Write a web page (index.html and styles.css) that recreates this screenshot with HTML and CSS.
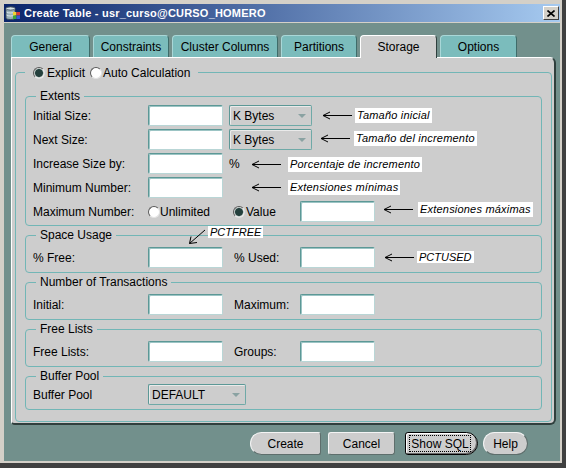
FILE: index.html
```html
<!DOCTYPE html>
<html>
<head>
<meta charset="utf-8">
<title>Create Table</title>
<link rel="stylesheet" href="styles.css">
</head>
<body>
<div class="window">
  <div class="titlebar">
    <svg class="app-icon" width="16" height="16" viewBox="0 0 16 16">
      <path d="M1 3.5 C1 1.5 10 1.5 10 3.5 V13 C10 15 1 15 1 13 Z" fill="#9ab0b8" stroke="#3a4a58" stroke-width="1"/>
      <ellipse cx="5.5" cy="3.5" rx="4.5" ry="1.6" fill="#d8e4ea" stroke="#3a4a58" stroke-width="0.8"/>
      <path d="M1.5 7 C3 8.3 8 8.3 9.5 7 M1.5 10 C3 11.3 8 11.3 9.5 10" stroke="#e8f0f4" fill="none" stroke-width="0.8"/>
      <rect x="8" y="7" width="3.5" height="3.5" fill="#f2d230"/>
      <rect x="11.5" y="7" width="3.5" height="3.5" fill="#d83a3a"/>
      <rect x="8" y="10.5" width="3.5" height="3.5" fill="#3aa83a"/>
      <rect x="11.5" y="10.5" width="3.5" height="3.5" fill="#3a5ad8"/>
    </svg>
    <span class="title">Create Table - usr_curso@CURSO_HOMERO</span>
    <span class="close"><svg width="8" height="7" viewBox="0 0 8 7"><path d="M0.5 0.5 L7.5 6.5 M7.5 0.5 L0.5 6.5" stroke="#000" stroke-width="1.6"/></svg></span>
  </div>

  <div class="client">
    <div class="tabs">
      <div class="tab t-general">General</div>
      <div class="tab t-constraints">Constraints</div>
      <div class="tab t-cluster">Cluster Columns</div>
      <div class="tab t-partitions">Partitions</div>
      <div class="tab t-storage active">Storage</div>
      <div class="tab t-options">Options</div>
    </div>

    <div class="panel">
      <fieldset class="outer">
        <legend class="mode"><span class="radio on"></span><span class="mtext">Explicit</span><span class="radio r-auto"></span><span class="mtext">Auto Calculation</span></legend>

        <fieldset class="group g-extents">
          <legend>Extents</legend>
          <div class="row"><span class="lbl">Initial Size:</span><span class="field"></span><span class="select s-unit">K Bytes<i class="caret"></i></span></div>
          <div class="row"><span class="lbl">Next Size:</span><span class="field"></span><span class="select s-unit">K Bytes<i class="caret"></i></span></div>
          <div class="row"><span class="lbl">Increase Size by:</span><span class="field"></span><span class="pct">%</span></div>
          <div class="row"><span class="lbl">Minimum Number:</span><span class="field"></span></div>
          <div class="row"><span class="lbl">Maximum Number:</span><span class="opt o-unl"><span class="radio"></span>Unlimited</span><span class="opt o-val"><span class="radio on"></span>Value</span><span class="field"></span></div>
        </fieldset>

        <fieldset class="group g-space">
          <legend>Space Usage</legend>
          <div class="row"><span class="lbl">% Free:</span><span class="field"></span><span class="lbl2">% Used:</span><span class="field"></span></div>
        </fieldset>

        <fieldset class="group g-trans">
          <legend>Number of Transactions</legend>
          <div class="row"><span class="lbl">Initial:</span><span class="field"></span><span class="lbl2">Maximum:</span><span class="field"></span></div>
        </fieldset>

        <fieldset class="group g-free">
          <legend>Free Lists</legend>
          <div class="row"><span class="lbl">Free Lists:</span><span class="field"></span><span class="lbl2">Groups:</span><span class="field"></span></div>
        </fieldset>

        <fieldset class="group g-buffer">
          <legend>Buffer Pool</legend>
          <div class="row"><span class="lbl">Buffer Pool</span><span class="select s-pool">DEFAULT<i class="caret"></i></span></div>
        </fieldset>
      </fieldset>
    </div>

    <div class="buttons">
      <span class="btn b-create">Create</span>
      <span class="btn b-cancel">Cancel</span>
      <span class="btn b-sql"><span class="focus">Show SQL</span></span>
      <span class="btn b-help">Help</span>
    </div>
  </div>

  <div class="notes">
    <div class="note n1"><svg class="arrow" viewBox="0 0 30 9"><path d="M1 4.5H30M1 4.5L8 1M1 4.5L8 8"/></svg><span class="tag">Tamaño inicial</span></div>
    <div class="note n2"><svg class="arrow" viewBox="0 0 30 9"><path d="M1 4.5H30M1 4.5L8 1M1 4.5L8 8"/></svg><span class="tag">Tamaño del incremento</span></div>
    <div class="note n3"><svg class="arrow" viewBox="0 0 30 9"><path d="M1 4.5H30M1 4.5L8 1M1 4.5L8 8"/></svg><span class="tag">Porcentaje de incremento</span></div>
    <div class="note n4"><svg class="arrow" viewBox="0 0 30 9"><path d="M1 4.5H30M1 4.5L8 1M1 4.5L8 8"/></svg><span class="tag">Extensiones mínimas</span></div>
    <div class="note n5"><svg class="arrow" viewBox="0 0 30 9"><path d="M1 4.5H30M1 4.5L8 1M1 4.5L8 8"/></svg><span class="tag">Extensiones máximas</span></div>
    <div class="note n6"><svg class="arrow" viewBox="0 0 30 9"><path d="M1 4.5H30M1 4.5L8 1M1 4.5L8 8"/></svg><span class="tag small">PCTUSED</span></div>
    <div class="note n7"><svg class="diag" viewBox="0 0 18 16"><path d="M17 1L1.5 14.5M1.5 14.5L3 7.5M1.5 14.5L9 13.5"/></svg><span class="tag small">PCTFREE</span></div>
  </div>
</div>
</body>
</html>
```

FILE: styles.css
```css
* { box-sizing: border-box; }

body {
  margin: 0;
  font-family: "Liberation Sans", Arial, sans-serif;
  font-size: 12px;
  color: #000;
}

.window {
  position: relative;
  width: 566px;
  height: 468px;
  background: #d4d0c8;
  padding: 4px 2px 2px 4px;
  border-right: 4px solid #404040;
  border-bottom: 5px solid #404040;
  display: flex;
  flex-direction: column;
}

/* title bar */
.titlebar {
  height: 18px;
  flex: none;
  margin-bottom: 1px;
  display: flex;
  align-items: center;
  background: linear-gradient(to right, #0a246a, #a6caf0);
  padding: 0 1px 0 1px;
}
.app-icon { flex: none; }
.title {
  margin-left: 3px;
  color: #fff;
  font-weight: bold;
  font-size: 11px;
  letter-spacing: 0.2px;
  white-space: nowrap;
}
.close {
  margin-left: auto;
  width: 16px;
  height: 14px;
  background: #d4d0c8;
  border: 1px solid;
  border-color: #fff #404040 #404040 #fff;
  display: flex;
  align-items: center;
  justify-content: center;
}

/* client area */
.client {
  flex: 1;
  background: #72908c;
  padding: 12px 4px 0 7px;
  display: flex;
  flex-direction: column;
}

.tabs {
  display: flex;
  gap: 3px;
  height: 22px;
  flex: none;
  align-items: flex-start;
}
.tab {
  height: 22px;
  display: flex;
  align-items: center;
  justify-content: center;
  background: #7bbcbc;
  border: 1px solid #a9d7d7;
  border-right-color: #3f6c6a;
  border-bottom: none;
  border-radius: 4px 4px 0 0;
  white-space: nowrap;
}
.t-general { width: 79px; }
.t-constraints { width: 76px; }
.t-cluster { width: 106px; }
.t-partitions { width: 76px; }
.t-storage { width: 77px; }
.t-options { width: 77px; }
.tab.active {
  background: #cdcdcd;
  border-color: #fff #2f403e #cdcdcd #fff;
  height: 23px;
  margin-bottom: -1px;
  position: relative;
  z-index: 1;
}

.panel {
  height: 368px;
  flex: none;
  background: #cdcdcd;
  border-top: 1px solid #fff;
  border-left: 1px solid #fff;
  border-right: 2px solid #2f3f3d;
  border-bottom: 2px solid #2f3f3d;
  border-radius: 0 6px 6px 4px;
  padding: 7px 2px 1px 3px;
  display: flex;
  flex-direction: column;
}

fieldset {
  margin: 0;
  min-width: 0;
  border: 1px solid #72b6b6;
  border-radius: 4px;
}
legend {
  line-height: 14px;
  white-space: nowrap;
}

.outer {
  flex: 1;
  padding: 0 9px;
}
.mode {
  padding: 0 8px;
  height: 14px;
}
.mode > * { vertical-align: middle; }
.mtext { display: inline-block; }
.mode .radio { margin-right: 2px; }
.mode .r-auto { margin-left: 5px; margin-right: 1px; }

.group {
  padding: 5px 7px 4px 7px;
  margin-top: 2px;
}
.group legend {
  margin-left: 3px;
  padding: 0 4px;
}
.g-extents { margin-top: 10px; padding-top: 2px; padding-bottom: 3px; }
.g-buffer { padding-top: 1px; padding-bottom: 4px; }

.row {
  display: flex;
  align-items: center;
  height: 21px;
  white-space: nowrap;
}
.row + .row { margin-top: 3px; }

.lbl { width: 115px; flex: none; }
.lbl2 { width: 66px; margin-left: 11px; flex: none; }
.pct { margin-left: 6px; }

.field {
  width: 75px;
  height: 21px;
  flex: none;
  background: #fff;
  border: 1px solid;
  border-color: #5c9896 #b9d6d6 #b9d6d6 #5c9896;
  border-radius: 2px;
  box-shadow: inset 1px 1px 0 #9cc4c4;
}

.select {
  height: 21px;
  flex: none;
  display: flex;
  align-items: center;
  justify-content: space-between;
  padding-left: 3px;
  background: #cdcdcd;
  border: 1px solid;
  border-color: #5c9896 #6fa9a7 #6fa9a7 #5c9896;
  border-radius: 2px;
  box-shadow: inset 1px 1px 0 #eaeaea;
}
.s-unit { width: 83px; margin-left: 6px; }
.s-pool { width: 98px; }
.caret {
  width: 0;
  height: 0;
  border-top: 4px solid #8aa2a2;
  border-left: 4px solid transparent;
  border-right: 4px solid transparent;
  margin-right: 5px;
}

.opt {
  display: flex;
  align-items: center;
  flex: none;
}
.o-unl { width: 85px; }
.o-val { width: 67px; }
.o-val .radio { margin-right: 1px; }

.radio {
  display: inline-block;
  width: 12px;
  height: 12px;
  border-radius: 50%;
  background: #fff;
  border: 1px solid;
  border-color: #5a5a5a #e4e4e4 #e4e4e4 #5a5a5a;
  flex: none;
}
.radio.on {
  background: radial-gradient(circle, #24403d 0, #24403d 3.5px, #a7b5b3 4.3px, #fff 5px);
}

/* buttons */
.buttons {
  display: flex;
  justify-content: flex-end;
  margin-top: 7px;
  padding-right: 28px;
  flex: none;
}
.btn {
  height: 23px;
  display: flex;
  align-items: center;
  justify-content: center;
  background: #cdcdcd;
  border: 1px solid;
  border-color: #f4f4f4 #5e6e6c #5e6e6c #f4f4f4;
  border-radius: 3px;
  flex: none;
  white-space: nowrap;
}
.b-create { width: 71px; margin-right: 7px; border-radius: 12px 3px 3px 12px; }
.b-cancel { width: 67px; margin-right: 10px; }
.b-sql {
  width: 73px;
  margin-right: 5px;
  border: 1px solid #000;
  border-radius: 3px 12px 12px 3px;
  box-shadow: inset 1px 1px 0 #fff, inset -1px -1px 0 #6a6a6a;
  justify-content: flex-start;
  padding-left: 3px;
}
.b-sql .focus {
  width: 62px;
  height: 17px;
  border: 1px dotted #000;
  display: flex;
  align-items: center;
  justify-content: center;
  white-space: nowrap;
  flex: none;
}
.b-help { width: 45px; border-radius: 12px; }

/* annotations drawn over the dialog */
.notes {
  position: absolute;
  inset: 0;
  pointer-events: none;
}
.note {
  position: absolute;
  display: flex;
  align-items: center;
}
.arrow {
  width: 30px;
  height: 9px;
  flex: none;
}
.arrow path, .diag path {
  stroke: #000;
  stroke-width: 1;
  fill: none;
}
.tag {
  background: #fff;
  font-style: italic;
  font-size: 11px;
  line-height: 15px;
  padding: 0 2px;
  letter-spacing: 0.2px;
  white-space: nowrap;
}
.tag.small { line-height: 12px; padding: 0 2px; letter-spacing: 0; }
.n1 { left: 322px; top: 108px; gap: 3px; }
.n2 { left: 320px; top: 131px; gap: 4px; }
.n3 { left: 251px; top: 157px; gap: 7px; }
.n4 { left: 251px; top: 180px; gap: 7px; }
.n5 { left: 383px; top: 202px; gap: 5px; }
.n6 { left: 384px; top: 251px; gap: 3px; }
.n7 { left: 188px; top: 226px; gap: 2px; align-items: flex-start; }
.diag { width: 18px; height: 16px; margin-top: 3px; flex: none; }
```
